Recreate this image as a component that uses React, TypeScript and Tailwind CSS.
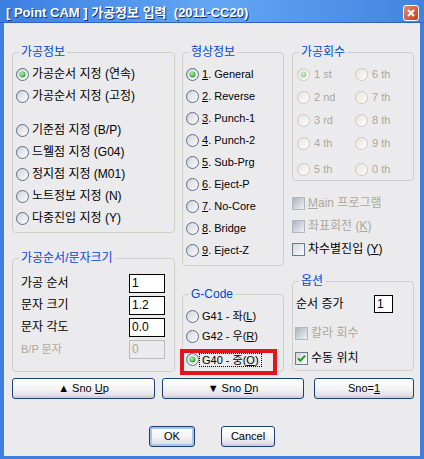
import React from 'react';

type Node = React.ReactNode;

function Radio({ checked = false, disabled = false }: { checked?: boolean; disabled?: boolean }) {
  const id = disabled ? 'rdis' : 'ren';
  return (
    <svg width="13" height="13" viewBox="0 0 13 13" className="block shrink-0">
      <defs>
        <linearGradient id={`${id}-f`} x1="0" y1="0" x2="1" y2="1">
          <stop offset="0" stopColor={disabled ? '#E4E3DC' : '#CFD2D8'} />
          <stop offset="1" stopColor="#FFFFFF" />
        </linearGradient>
        <radialGradient id={`${id}-d`} cx="0.4" cy="0.35" r="0.7">
          <stop offset="0" stopColor={disabled ? '#D8F0D4' : '#B6F4AC'} />
          <stop offset="1" stopColor={disabled ? '#94CC8F' : '#1E9E1E'} />
        </radialGradient>
      </defs>
      <circle cx="6.5" cy="6.5" r="6" fill={`url(#${id}-f)`} stroke={disabled ? '#CAC8BB' : '#5A6E86'} />
      {checked && <circle cx="6.5" cy="6.5" r="3" fill={`url(#${id}-d)`} />}
    </svg>
  );
}

function Check({ checked = false, disabled = false }: { checked?: boolean; disabled?: boolean }) {
  const id = disabled ? 'cdis' : 'cen';
  return (
    <svg width="13" height="13" viewBox="0 0 13 13" className="block shrink-0">
      <defs>
        <linearGradient id={`${id}-f`} x1="0" y1="0" x2="1" y2="1">
          <stop offset="0" stopColor={disabled ? '#A7B0C0' : '#D0D3DA'} />
          <stop offset="1" stopColor={disabled ? '#F4F4F6' : '#FFFFFF'} />
        </linearGradient>
      </defs>
      <rect x="0.5" y="0.5" width="12" height="12" fill={`url(#${id}-f)`} stroke={disabled ? '#B2B6BF' : '#6A7B90'} />
      {checked && <path d="M3 6.3l2.3 2.5L10.2 3.6" fill="none" stroke="#21A121" strokeWidth="2" />}
    </svg>
  );
}

function Group({ title, className = '', children }: { title: string; className?: string; children: Node }) {
  return (
    <div className={`flex flex-col border border-[#D0D0C8] rounded-[4px] ${className}`}>
      <span className="-mt-[7px] ml-[6px] self-start px-[2px] h-[12px] leading-[12px] bg-[#EBEBEE] text-[#0046D5] text-[12px]">
        {title}
      </span>
      {children}
    </div>
  );
}

function RadioRow({ label, checked, className = '' }: { label: Node; checked?: boolean; className?: string }) {
  return (
    <div className={`flex items-center h-[22px] pl-[3px] gap-[3px] ${className}`}>
      <Radio checked={checked} />
      <span className="whitespace-pre">{label}</span>
    </div>
  );
}

function CheckRow({ label, checked, disabled, className = '' }: { label: Node; checked?: boolean; disabled?: boolean; className?: string }) {
  return (
    <div className={`flex items-center h-[20px] gap-[3px] ${className}`}>
      <Check checked={checked} disabled={disabled} />
      <span className={`whitespace-pre ${disabled ? 'text-[#ACA899]' : 'text-black'}`}>{label}</span>
    </div>
  );
}

function Field({ label, value, disabled = false }: { label: string; value: string; disabled?: boolean }) {
  return (
    <div className="flex items-center justify-between h-[22px]">
      <span className={disabled ? 'text-[11px] text-[#ACA899]' : 'text-black'}>{label}</span>
      <input
        readOnly
        value={value}
        className={`w-[36px] h-[19px] px-[2px] text-[12px] outline-none border ${disabled ? 'border-[#BDBCB5] bg-[#EBEBEE] text-[#ACA899]' : 'border-black bg-white text-black'}`}
      />
    </div>
  );
}

function Btn({ className = '', primary = false, children }: { className?: string; primary?: boolean; children: Node }) {
  return (
    <button
      className={`h-[21px] rounded-[3px] border border-[#1C3F74] bg-linear-to-b from-white via-[#F4F4F6] to-[#D9DAE2] text-[11px] leading-none text-black flex items-center justify-center ${primary ? 'shadow-[inset_0_0_0_2px_#A9C3EE]' : 'shadow-[inset_0_-2px_0_#D0D0D8]'} ${className}`}
    >
      <span className="whitespace-pre">{children}</span>
    </button>
  );
}

const shapes = ['General', 'Reverse', 'Punch-1', 'Punch-2', 'Sub-Prg', 'Eject-P', 'No-Core', 'Bridge', 'Eject-Z'];
const passes = [
  ['1 st', '6 th'],
  ['2 nd', '7 th'],
  ['3 rd', '8 th'],
  ['4 th', '9 th'],
  ['5 th', '0 th'],
];
const passGap = ['mt-[6px]', 'mt-[3px]', 'mt-[3px]', 'mt-[3px]', 'mt-[6px]'];

export default function App() {
  return (
    <div className="w-[424px] h-[459px] flex flex-col bg-[#3D7EE0] font-['Liberation_Sans','Noto_Sans_CJK_KR',sans-serif] text-[12px] leading-[14px] text-black">
      {/* title bar */}
      <div className="h-[23px] shrink-0 flex items-start bg-linear-to-r from-[#3B7EE2] via-[#63A7F4] to-[#4283E0] border-b border-[#2D62C6]">
        <span className="mt-[5px] ml-[6px] text-white font-bold text-[13px] leading-[16px] whitespace-pre [text-shadow:1px_1px_0_#10307A]">
          [ Point CAM ] 가공정보 입력  (2011-CC20)
        </span>
        <div className="ml-auto mr-[5px] mt-[5px] w-[16px] h-[16px] rounded-[3px] border border-white bg-linear-to-br from-[#E8866E] to-[#C33A1F] flex items-center justify-center">
          <svg width="8" height="8" viewBox="0 0 8 8">
            <path d="M1 1L7 7M7 1L1 7" stroke="white" strokeWidth="2" />
          </svg>
        </div>
      </div>

      <div className="flex-1 mx-[4px] mb-[3px] bg-[#EBEBEE] flex flex-col pl-[8px] pt-[29px]">
        <div className="flex items-start">
          {/* left column */}
          <div className="w-[163px] flex flex-col">
            <Group title="가공정보" className="pb-[3px]">
              <RadioRow className="mt-[5px]" checked label="가공순서 지정 (연속)" />
              <RadioRow label="가공순서 지정 (고정)" />
              <RadioRow className="mt-[12px]" label="기준점 지정 (B/P)" />
              <RadioRow label="드웰점 지정 (G04)" />
              <RadioRow label="정지점 지정 (M01)" />
              <RadioRow label="노트정보 지정 (N)" />
              <RadioRow label="다중진입 지정 (Y)" />
            </Group>
            <Group title="가공순서/문자크기" className="mt-[25px] pb-[11px]">
              <div className="mt-[8px] flex flex-col pl-[8px] pr-[9px]">
                <Field label="가공 순서" value="1" />
                <Field label="문자 크기" value="1.2" />
                <Field label="문자 각도" value="0.0" />
                <Field label="B/P 문자" value="0" disabled />
              </div>
            </Group>
          </div>

          {/* middle column */}
          <div className="ml-[7px] w-[102px] flex flex-col">
            <Group title="형상정보" className="pb-[4px]">
              {shapes.map((s, i) => (
                <RadioRow
                  key={s}
                  checked={i === 0}
                  className={i === 0 ? 'mt-[5px]' : ''}
                  label={
                    <span className="text-[11px]">
                      <span className="underline">{i + 1}</span>. {s}
                    </span>
                  }
                />
              ))}
            </Group>
            <Group title="G-Code" className="mt-[28px]">
              <RadioRow className="mt-[6px] !h-[20px]" label={<span className="text-[11px]">G41 - 좌(<span className="underline">L</span>)</span>} />
              <RadioRow className="!h-[20px]" label={<span className="text-[11px]">G42 - 우(<span className="underline">R</span>)</span>} />
              <div className="mt-[7px] ml-[1px] w-[89px] h-[18px] flex items-start pl-[2px] outline-4 outline-solid outline-[#E3141B]">
                <Radio checked />
                <span className="h-[14px] px-[2px] leading-[12px] text-[11px] whitespace-pre border border-dotted border-black">
                  G40 - 중(<span className="underline">O</span>)
                </span>
              </div>
            </Group>
          </div>

          {/* right column */}
          <div className="ml-[8px] w-[122px] flex flex-col">
            <Group title="가공회수" className="pb-[1px]">
              {passes.map((row, r) => (
                <div key={r} className={`flex h-[20px] items-center pl-[4px] ${passGap[r]}`}>
                  {row.map((t, c) => (
                    <div key={t} className="w-[62px] flex items-center gap-[4px]">
                      <Radio disabled checked={r === 0 && c === 0} />
                      <span className="text-[11px] text-[#ACA899]">{t}</span>
                    </div>
                  ))}
                </div>
              ))}
            </Group>
            <CheckRow className="mt-[12px]" disabled label={<><span className="underline">M</span>ain 프로그램</>} />
            <CheckRow className="mt-[3px]" disabled label={<>좌표회전 (<span className="underline">K</span>)</>} />
            <CheckRow className="mt-[3px]" label={<>차수별진입 (<span className="underline">Y</span>)</>} />
            <Group title="옵션" className="mt-[22px] pb-[2px]">
              <div className="mt-[7px] h-[20px] flex items-center pl-[3px]">
                <span>순서 증가</span>
                <input
                  readOnly
                  value="1"
                  className="ml-auto mr-[20px] w-[19px] h-[18px] px-[2px] text-[12px] outline-none border border-black bg-white"
                />
              </div>
              <CheckRow className="mt-[9px] pl-[2px]" disabled label="칼라 회수" />
              <CheckRow className="mt-[5px] pl-[2px]" checked label="수동 위치" />
            </Group>
          </div>
        </div>

        <div className="mt-[6px] flex">
          <Btn className="w-[143px]">▲ Sno <span className="underline">U</span>p</Btn>
          <Btn className="ml-[7px] w-[142px]">▼ Sno <span className="underline">D</span>n</Btn>
          <Btn className="ml-[10px] w-[100px]">Sno=<span className="underline">1</span></Btn>
        </div>

        <div className="mt-[27px] flex justify-center gap-[26px] pr-[8px]">
          <Btn primary className="w-[46px]">OK</Btn>
          <Btn className="w-[54px]">Cancel</Btn>
        </div>
      </div>
    </div>
  );
}
